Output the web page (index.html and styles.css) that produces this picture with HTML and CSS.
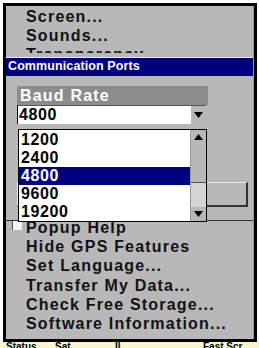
FILE: index.html
```html
<!DOCTYPE html>
<html>
<head>
<meta charset="utf-8">
<link rel="stylesheet" href="styles.css">
</head>
<body>
<div class="screen">
  <div class="frame">
    <ul class="menu">
      <li>Screen...</li>
      <li>Sounds...</li>
      <li>Transparency...</li>
      <li>Alarms...</li>
      <li>Units of Measure...</li>
      <li>Coordinate System...</li>
      <li>Map Datum...</li>
      <li>Map Fix...</li>
      <li>Communication Ports...</li>
      <li>NMEA Output...</li>
      <li>Reset Options...</li>
      <li class="check"><span class="box"></span>Popup Help</li>
      <li>Hide GPS Features</li>
      <li>Set Language...</li>
      <li>Transfer My Data...</li>
      <li>Check Free Storage...</li>
      <li>Software Information...</li>
    </ul>
    <div class="dialog">
      <div class="title">Communication Ports</div>
      <div class="body">
        <div class="label">Baud Rate</div>
        <div class="combo">
          <span class="value">4800</span>
          <span class="arrow"><svg width="9" height="6" viewBox="0 0 9 6"><path d="M0 0H9L4.5 6Z" fill="#000"/></svg></span>
        </div>
        <div class="button"></div>
      </div>
      <div class="list">
        <ul class="items">
          <li>1200</li>
          <li>2400</li>
          <li class="sel">4800</li>
          <li>9600</li>
          <li>19200</li>
        </ul>
        <div class="scroll">
          <span class="sbtn"><svg width="9" height="6" viewBox="0 0 9 6"><path d="M0 6H9L4.5 0Z" fill="#000"/></svg></span>
          <span class="thumb"></span>
          <span class="track"></span>
          <span class="sbtn"><svg width="9" height="6" viewBox="0 0 9 6"><path d="M0 0H9L4.5 6Z" fill="#000"/></svg></span>
        </div>
      </div>
    </div>
  </div>
  <div class="status">
    <span class="s1">Status</span>
    <span class="s2">Sat</span>
    <span class="s3">Il</span>
    <span class="s4">Fast Scr</span>
  </div>
</div>
</body>
</html>
```

FILE: styles.css
```css
html, body {
  margin: 0;
  padding: 0;
  background: #fff;
}
.screen {
  width: 259px;
  height: 348px;
  overflow: hidden;
  font-family: "Liberation Sans", Arial, sans-serif;
  font-weight: bold;
}
.frame {
  position: relative;
  margin: 3px 2px 0 3px;
  height: 333px;
  border: 3px solid #000;
  background: #b8b8b8;
  overflow: hidden;
  box-shadow: inset -1px 0 0 #9a9a9a;
}
.menu {
  list-style: none;
  margin: 0;
  padding: 1px 0 0 20px;
  font-size: 16px;
  letter-spacing: 1.2px;
  color: #111;
}
.menu li {
  height: 19.2px;
  line-height: 19.2px;
  white-space: nowrap;
}
.menu .check {
  position: relative;
}
.box {
  position: absolute;
  left: -14px;
  top: 1px;
  width: 9px;
  height: 11px;
  background: #f4f4f4;
  border-left: 1px solid #555;
}
.dialog {
  position: absolute;
  left: 0;
  top: 47px;
  width: 247px;
  height: 168px;
  padding-top: 4px;
  box-sizing: border-box;
  background: #b8b8b8;
  border-bottom: 1px solid #333;
}
.title {
  height: 18px;
  line-height: 17px;
  background: #00007e;
  border-top: 1px solid #e8e8f0;
  color: #fff;
  font-size: 12.5px;
  padding-left: 2px;
  letter-spacing: 0.1px;
}
.body {
  padding: 10px 0 0 11px;
}
.label {
  width: 191px;
  height: 19px;
  background: #8c8c8c;
  color: #fff;
  font-size: 16px;
  line-height: 20px;
  letter-spacing: 1.2px;
  padding-left: 3px;
  box-sizing: border-box;
}
.combo {
  width: 189px;
  height: 19px;
  box-sizing: border-box;
  background: #fff;
  border-left: 1px solid #000;
  border-top: 1px solid #555;
  display: flex;
  align-items: center;
  justify-content: space-between;
}
.combo .value {
  font-size: 16px;
  letter-spacing: 0.6px;
  color: #000;
  padding-left: 1px;
}
.arrow {
  width: 15px;
  height: 18px;
  background: #b8b8b8;
  display: flex;
  align-items: center;
  justify-content: center;
}
.button {
  margin-top: 58px;
  width: 231px;
  height: 25px;
  box-sizing: border-box;
  border-top: 1px solid #e8e8e8;
  border-left: 1px solid #e8e8e8;
  border-right: 2px solid #333;
  border-bottom: 2px solid #333;
}
.list {
  position: absolute;
  left: 12px;
  top: 76px;
  width: 189px;
  height: 93px;
  box-sizing: border-box;
  background: #fff;
  border: 1px solid #000;
  display: flex;
}
.items {
  list-style: none;
  margin: 0;
  padding: 1px 0 0 0;
  flex: 1;
  font-size: 16px;
  letter-spacing: 0.6px;
  color: #000;
}
.items li {
  height: 18px;
  line-height: 18px;
  padding-left: 2px;
}
.items .sel {
  background: #00007e;
  color: #fff;
}
.scroll {
  width: 15px;
  display: flex;
  flex-direction: column;
  border-left: 1px solid #999;
}
.sbtn {
  height: 14px;
  background: #b8b8b8;
  display: flex;
  align-items: center;
  justify-content: center;
}
.thumb {
  height: 38px;
  background: #b8b8b8;
  border-bottom: 1px solid #555;
}
.track {
  flex: 1;
  background-color: #d8d8d8;
  background-image: repeating-conic-gradient(#c4c4c4 0 25%, #e4e4e4 0 50%);
  background-size: 2px 2px;
}
.status {
  height: 6px;
  background: #f6f6c8;
  position: relative;
  font-size: 10px;
  line-height: 10px;
}
.status span {
  position: absolute;
  top: 0;
  color: #000;
}
.s1 { left: 6px; }
.s2 { left: 55px; }
.s3 { left: 115px; }
.s4 { left: 203px; }
```
